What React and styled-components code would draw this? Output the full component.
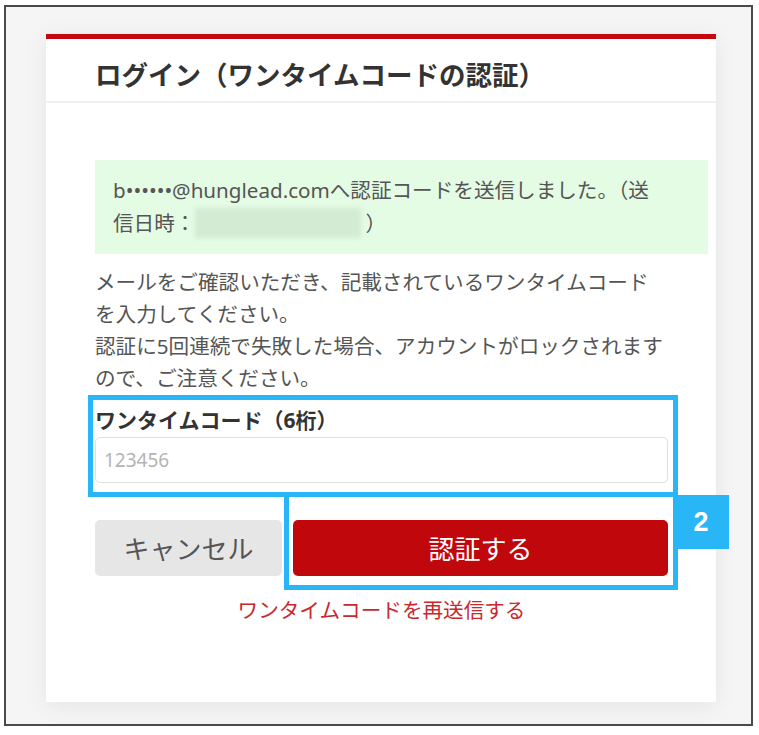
import React from "react";
import styled, { createGlobalStyle } from "styled-components";

const GlobalStyle = createGlobalStyle`
  html, body {
    margin: 0;
    padding: 0;
    background: #ffffff;
  }
  body {
    font-family: "Noto Sans", "Noto Sans CJK JP", sans-serif;
    color: #555;
  }
`;

const ANNOTATION = "#29b6f6";

const Frame = styled.div`
  box-sizing: border-box;
  margin: 5px 6px 0 4px;
  height: 721px;
  border: 2px solid #4a4a4a;
  background: #f5f5f5;
  padding: 27px 35px 0 40px;
`;

const Card = styled.div`
  background: #fff;
  border-top: 5px solid #c4080d;
  box-shadow: 0 4px 22px rgba(0, 0, 0, 0.07);
`;

const Header = styled.div`
  box-sizing: border-box;
  height: 64px;
  display: flex;
  align-items: center;
  padding: 6px 49px 0;
  border-bottom: 2px solid #f0f0f0;
`;

const Title = styled.h1`
  margin: 0;
  font-size: 26.5px;
  font-weight: 700;
  color: #333;
`;

const Body = styled.div`
  padding: 57px 48px 78px 49px;
`;

const Notice = styled.div`
  background: #e4fbe4;
  margin-right: -40px;
  padding: 14px 50px 14px 18px;
  font-size: 20.6px;
  line-height: 33px;
  color: #555;
`;

const Blurred = styled.span`
  display: inline-block;
  width: 166px;
  height: 30px;
  vertical-align: middle;
  margin: -4px 4px 0 0;
  background: #d3ead3;
  filter: blur(2px);
`;

const Description = styled.p`
  margin: 12px 0 0;
  font-size: 20.6px;
  line-height: 32px;
  color: #555;
`;

const Field = styled.div`
  position: relative;
  margin-top: 11px;
`;

const Label = styled.label`
  display: block;
  font-size: 21px;
  line-height: 30px;
  font-weight: 700;
  color: #333;
`;

const Input = styled.input`
  box-sizing: border-box;
  display: block;
  width: 100%;
  height: 46px;
  margin-top: 2px;
  padding: 0 8px;
  border: 1.5px solid #dde1e6;
  border-radius: 5px;
  font-family: "Noto Sans", sans-serif;
  font-size: 19px;
  color: #333;
  outline: none;
  &::placeholder {
    color: #b4b4b4;
  }
`;

const Highlight = styled.div`
  position: absolute;
  top: ${(p) => p.$top}px;
  left: ${(p) => p.$left}px;
  right: ${(p) => p.$right}px;
  bottom: ${(p) => p.$bottom}px;
  border: 5px solid ${ANNOTATION};
  pointer-events: none;
`;

const Badge = styled.div`
  position: absolute;
  top: -25px;
  right: -61px;
  width: 56px;
  height: 54px;
  background: ${ANNOTATION};
  color: #fff;
  font-family: "Liberation Sans", Arial, sans-serif;
  font-weight: 700;
  font-size: 27px;
  display: flex;
  align-items: center;
  justify-content: center;
`;

const Actions = styled.div`
  display: flex;
  gap: 11px;
  margin-top: 37px;
`;

const Button = styled.button`
  height: 56px;
  border: none;
  border-radius: 5px;
  font-family: "Noto Sans", "Noto Sans CJK JP", sans-serif;
  font-size: 26px;
  font-weight: 400;
  cursor: pointer;
  background: ${(p) => (p.$primary ? "#c0080c" : "#e6e6e6")};
  color: ${(p) => (p.$primary ? "#fff" : "#555")};
`;

const Cancel = styled(Button)`
  width: 187px;
`;

const SubmitWrap = styled.div`
  position: relative;
  flex: 1;
  display: flex;
`;

const Submit = styled(Button)`
  flex: 1;
`;

const Resend = styled.a`
  display: block;
  margin-top: 20px;
  text-align: center;
  font-size: 20.6px;
  line-height: 28px;
  color: #c8282e;
  text-decoration: none;
  cursor: pointer;
`;

export default function App() {
  return (
    <>
      <GlobalStyle />
      <Frame>
        <Card>
          <Header>
            <Title>ログイン（ワンタイムコードの認証）</Title>
          </Header>
          <Body>
            <Notice>
              b••••••@hunglead.comへ認証コードを送信しました。（送信日時：
              <Blurred />）
            </Notice>
            <Description>
              メールをご確認いただき、記載されているワンタイムコードを入力してください。
              <br />
              認証に5回連続で失敗した場合、アカウントがロックされますので、ご注意ください。
            </Description>
            <Field>
              <Label htmlFor="otp">ワンタイムコード（6桁）</Label>
              <Input id="otp" placeholder="123456" />
              <Highlight $top={-10} $left={-7} $right={-10} $bottom={-14} />
            </Field>
            <Actions>
              <Cancel>キャンセル</Cancel>
              <SubmitWrap>
                <Submit $primary>認証する</Submit>
                <Highlight $top={-28} $left={-9} $right={-10} $bottom={-14} />
                <Badge>2</Badge>
              </SubmitWrap>
            </Actions>
            <Resend>ワンタイムコードを再送信する</Resend>
          </Body>
        </Card>
      </Frame>
    </>
  );
}
